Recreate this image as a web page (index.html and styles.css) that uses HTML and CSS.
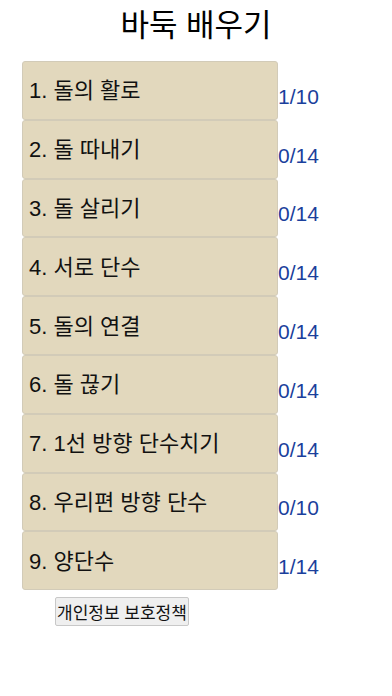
FILE: index.html
```html
<!DOCTYPE html>
<html lang="ko">
<head>
<meta charset="utf-8">
<link rel="stylesheet" href="styles.css">
</head>
<body>
<h1 class="title">바둑 배우기</h1>
<div class="list">
  <div class="row"><button class="lesson">1. 돌의 활로</button><span class="score">1/10</span></div>
  <div class="row"><button class="lesson">2. 돌 따내기</button><span class="score">0/14</span></div>
  <div class="row"><button class="lesson">3. 돌 살리기</button><span class="score">0/14</span></div>
  <div class="row"><button class="lesson">4. 서로 단수</button><span class="score">0/14</span></div>
  <div class="row"><button class="lesson">5. 돌의 연결</button><span class="score">0/14</span></div>
  <div class="row"><button class="lesson">6. 돌 끊기</button><span class="score">0/14</span></div>
  <div class="row"><button class="lesson">7. 1선 방향 단수치기</button><span class="score">0/14</span></div>
  <div class="row"><button class="lesson">8. 우리편 방향 단수</button><span class="score">0/10</span></div>
  <div class="row"><button class="lesson">9. 양단수</button><span class="score">1/14</span></div>
</div>
<div class="footer"><button class="privacy">개인정보 보호정책</button></div>
</body>
</html>
```
FILE: styles.css
```css
html, body {
  margin: 0;
  padding: 0;
  background: #ffffff;
  font-family: "Liberation Sans", "Noto Sans CJK KR", sans-serif;
}
.title {
  margin: 0;
  padding-top: 6px;
  height: 55px;
  box-sizing: border-box;
  text-align: center;
  font-weight: normal;
  font-size: 31px;
  line-height: 40px;
  color: #000;
}
.list {
  display: flex;
  flex-direction: column;
  padding-left: 22px;
  margin-top: 6px;
}
.row {
  display: flex;
  align-items: center;
  height: 58.8px;
}
.lesson {
  width: 256px;
  height: 58.8px;
  box-sizing: border-box;
  margin: 0;
  padding: 0 0 4px 6px;
  text-align: left;
  font-family: inherit;
  font-size: 22px;
  color: #111;
  background: #e2d8bd;
  border: 1px solid #d2cbb8;
  border-radius: 3px;
}
.score {
  margin-left: 0;
  padding-top: 13px;
  font-size: 21px;
  color: #1b3f9c;
}
.footer {
  padding-left: 55px;
  margin-top: 7px;
}
.privacy {
  margin: 0;
  padding: 1px 1px;
  font-family: inherit;
  font-size: 17px;
  color: #111;
  background: #efefef;
  border: 1px solid #c8c8c8;
  border-radius: 2px;
}
```
